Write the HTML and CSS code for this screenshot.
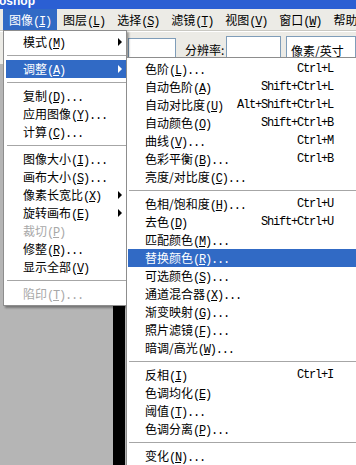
FILE: index.html
```html
<!DOCTYPE html>
<html>
<head>
<meta charset="UTF-8">
<title>图像 - 调整</title>

	<link rel="stylesheet" href="styles.css">

</head>
<body>

	<div class="app">
		<div class="title"><span>oshop</span></div>

		<div class="menubar">
			<span class="on">图像<span class="k">(<u>I</u>)</span></span>
			<span>图层<span class="k">(<u>L</u>)</span></span>
			<span>选择<span class="k">(<u>S</u>)</span></span>
			<span>滤镜<span class="k">(<u>T</u>)</span></span>
			<span>视图<span class="k">(<u>V</u>)</span></span>
			<span>窗口<span class="k">(<u>W</u>)</span></span>
			<span>帮助<span class="k">(<u>H</u>)</span></span>
		</div>

		<div class="options">
			<div class="field f1"></div>
			<div class="lbl">分辨率:</div>
			<div class="field f2"></div>
			<div class="field f3">像素/英寸</div>
		</div>

		<div class="work">
			<div class="pane"></div>
			<div class="doc"></div>
			<div class="rest"></div>
		</div>

		<!-- 图像 메뉴 -->
		<div class="menu main">
			<div class="row more"><span class="t">模式<span class="k">(<u>M</u>)</span></span></div>
			<div class="sep"></div>
			<div class="row more on"><span class="t">调整<span class="k">(<u>A</u>)</span></span></div>
			<div class="sep"></div>
			<div class="row"><span class="t">复制<span class="k">(<u>D</u>)...</span></span></div>
			<div class="row"><span class="t">应用图像<span class="k">(<u>Y</u>)...</span></span></div>
			<div class="row"><span class="t">计算<span class="k">(<u>C</u>)...</span></span></div>
			<div class="sep"></div>
			<div class="row"><span class="t">图像大小<span class="k">(<u>I</u>)...</span></span></div>
			<div class="row"><span class="t">画布大小<span class="k">(<u>S</u>)...</span></span></div>
			<div class="row more"><span class="t">像素长宽比<span class="k">(<u>X</u>)</span></span></div>
			<div class="row more"><span class="t">旋转画布<span class="k">(<u>E</u>)</span></span></div>
			<div class="row off"><span class="t">裁切<span class="k">(<u>P</u>)</span></span></div>
			<div class="row"><span class="t">修整<span class="k">(<u>R</u>)...</span></span></div>
			<div class="row"><span class="t">显示全部<span class="k">(<u>V</u>)</span></span></div>
			<div class="sep"></div>
			<div class="row off"><span class="t">陷印<span class="k">(<u>T</u>)...</span></span></div>
		</div>

		<!-- 调整 서브메뉴 -->
		<div class="menu sub">
			<div class="row"><span class="t">色阶<span class="k">(<u>L</u>)...</span></span><span class="sc">Ctrl+L</span></div>
			<div class="row"><span class="t">自动色阶<span class="k">(<u>A</u>)</span></span><span class="sc">Shift+Ctrl+L</span></div>
			<div class="row"><span class="t">自动对比度<span class="k">(<u>U</u>)</span></span><span class="sc">Alt+Shift+Ctrl+L</span></div>
			<div class="row"><span class="t">自动颜色<span class="k">(<u>O</u>)</span></span><span class="sc">Shift+Ctrl+B</span></div>
			<div class="row"><span class="t">曲线<span class="k">(<u>V</u>)...</span></span><span class="sc">Ctrl+M</span></div>
			<div class="row"><span class="t">色彩平衡<span class="k">(<u>B</u>)...</span></span><span class="sc">Ctrl+B</span></div>
			<div class="row"><span class="t">亮度/对比度<span class="k">(<u>C</u>)...</span></span></div>
			<div class="sep"></div>
			<div class="row"><span class="t">色相/饱和度<span class="k">(<u>H</u>)...</span></span><span class="sc">Ctrl+U</span></div>
			<div class="row"><span class="t">去色<span class="k">(<u>D</u>)</span></span><span class="sc">Shift+Ctrl+U</span></div>
			<div class="row"><span class="t">匹配颜色<span class="k">(<u>M</u>)...</span></span></div>
			<div class="row on"><span class="t">替换颜色<span class="k">(<u>R</u>)...</span></span></div>
			<div class="row"><span class="t">可选颜色<span class="k">(<u>S</u>)...</span></span></div>
			<div class="row"><span class="t">通道混合器<span class="k">(<u>X</u>)...</span></span></div>
			<div class="row"><span class="t">渐变映射<span class="k">(<u>G</u>)...</span></span></div>
			<div class="row"><span class="t">照片滤镜<span class="k">(<u>F</u>)...</span></span></div>
			<div class="row"><span class="t">暗调/高光<span class="k">(<u>W</u>)...</span></span></div>
			<div class="sep"></div>
			<div class="row"><span class="t">反相<span class="k">(<u>I</u>)</span></span><span class="sc">Ctrl+I</span></div>
			<div class="row"><span class="t">色调均化<span class="k">(<u>E</u>)</span></span></div>
			<div class="row"><span class="t">阈值<span class="k">(<u>T</u>)...</span></span></div>
			<div class="row"><span class="t">色调分离<span class="k">(<u>P</u>)...</span></span></div>
			<div class="sep"></div>
			<div class="row"><span class="t">变化<span class="k">(<u>N</u>)...</span></span></div>
		</div>
	</div>

</body>
</html>
```

FILE: styles.css
```css
body{
	margin: 0;
	width: 356px;
	height: 465px;
	overflow: hidden;
	font-family: "Noto Sans CJK SC", sans-serif;
	font-size: 12px;
	color: #000;
}
.app{
	position: relative;
	height: 465px;
	background-color: #b5b5b5;
}

/* 반각 문자 (SimSun 느낌) */
.k, .sc{
	font-family: "Liberation Mono", monospace;
	font-size: 12px;
	letter-spacing: -1.2px;
	line-height: 1;
}
.k u{
	text-underline-offset: 1px;
}

.title{
	height: 9px;
	overflow: hidden;
	background-color: #2b5fd3;
	color: #fff;
	font: bold 12px "Liberation Sans", sans-serif;
}
.title > span{
	display: block;
	line-height: 12px;
	margin: -5px 0 0 -1px;
}

.menubar{
	display: flex;
	height: 21px;
	padding-left: 3px;
	overflow: hidden;
	white-space: nowrap;
	background-color: #ecebe6;
	border-bottom: 1px solid #c9c8c2;
}
.menubar > span{
	padding: 0 6px;
	line-height: 21px;
}
.menubar > .on{
	background-color: #316ac5;
	color: #fff;
}

.options{
	display: flex;
	align-items: flex-start;
	height: 28px;
	padding: 4px 0 0 128px;
	background-color: #ecebe6;
	border-top: 1px solid #fff;
	overflow: hidden;
}
.field{
	height: 24px;
	box-sizing: border-box;
	background-color: #fff;
	border: 1px solid #7f9db9;
}
.f1{
	width: 48px;
	margin-top: 2px;
}
.lbl{
	width: 41px;
	margin: 6px 0 0 9px;
	line-height: 16px;
	white-space: nowrap;
}
.f2{
	width: 55px;
	margin-right: 5px;
}
.f3{
	flex: 1;
	padding: 6px 0 0 4px;
	line-height: 16px;
	white-space: nowrap;
}

.work{
	display: flex;
	height: 402px;
}
.pane{
	width: 113px;
	background-color: #b5b5b5;
}
.doc{
	width: 12px;
	background-color: #000;
}
.rest{
	flex: 1;
	background-color: #b5b5b5;
}

/* 드롭다운 메뉴 */
.menu{
	position: absolute;
	background-color: #fff;
	border: 1px solid #8d8d8d;
	box-shadow: 2px 2px 2px rgba(0,0,0,0.35);
}
.main{
	left: 3px;
	top: 30px;
	width: 120px;
	padding: 2px 0 2px 2px;
}
.sub{
	left: 126px;
	top: 57px;
	width: 232px;
	padding: 2px 1px;
}
.row{
	display: flex;
	align-items: center;
	height: 18px;
	line-height: 18px;
	padding-left: 17px;
	white-space: nowrap;
}
.row.on{
	background-color: #316ac5;
	color: #fff;
}
.row.off{
	color: #a8a8a8;
}
.row.more::after{
	content: "";
	margin: 0 4px 0 auto;
	border-left: 4px solid #000;
	border-top: 4px solid transparent;
	border-bottom: 4px solid transparent;
}
.row.more.on::after{
	border-left-color: #fff;
}
.sc{
	margin: 0 27px 0 auto;
}
.sep{
	margin: 4px 0 4px 1px;
	border-top: 1px solid #a6a6a6;
}
```
